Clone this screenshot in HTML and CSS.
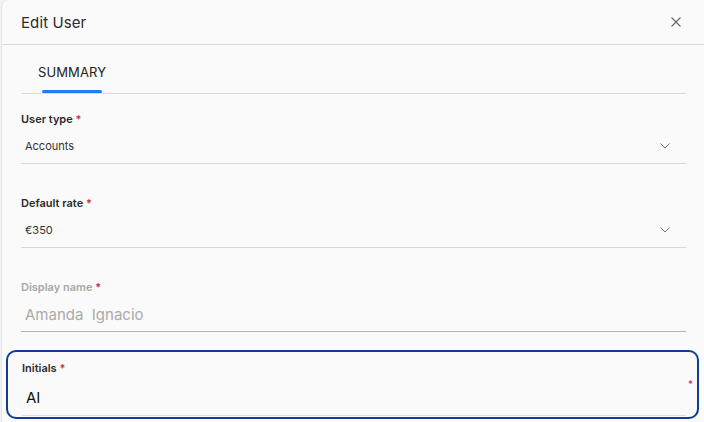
FILE: index.html
```html
<!DOCTYPE html>
<html lang="en">
<head>
    <meta charset="UTF-8">
    <title>Edit User</title>
    <link rel="stylesheet" href="styles.css">
</head>
<body>

<div class="dialog">
    <div class="dialog-header">
        <h2>Edit User</h2>
        <button class="close-btn" aria-label="Close">
            <svg width="10" height="10" viewBox="0 0 10 10"><path d="M0.5 0.5L9.5 9.5M9.5 0.5L0.5 9.5" stroke="#666" stroke-width="1.1" fill="none"/></svg>
        </button>
    </div>

    <div class="dialog-body">
        <div class="tabs">
            <div class="tab active">SUMMARY</div>
        </div>

        <div class="field">
            <label>User type <span class="req">*</span></label>
            <div class="control">
                <span class="value">Accounts</span>
                <svg class="chevron" width="10" height="6" viewBox="0 0 10 6"><path d="M0.5 0.5L5 5L9.5 0.5" stroke="#777" stroke-width="1" fill="none"/></svg>
            </div>
        </div>

        <div class="field">
            <label>Default rate <span class="req">*</span></label>
            <div class="control">
                <span class="value">€350</span>
                <svg class="chevron" width="10" height="6" viewBox="0 0 10 6"><path d="M0.5 0.5L5 5L9.5 0.5" stroke="#777" stroke-width="1" fill="none"/></svg>
            </div>
        </div>

        <div class="field disabled">
            <label>Display name <span class="req">*</span></label>
            <div class="control">
                <span class="value big">Amanda&nbsp; Ignacio</span>
            </div>
        </div>
    </div>

    <div class="field focused">
        <label>Initials <span class="req">*</span></label>
        <div class="control">
            <span class="value big">AI</span>
        </div>
        <span class="side-req">*</span>
    </div>
</div>

</body>
</html>
```

FILE: styles.css
```css
body {
    margin: 0;
    padding: 0;
    background: #f2f2f4;
    font-family: 'Inter', 'Open Sans', sans-serif;
    overflow: hidden;
}

.dialog {
    background: #fafafa;
    height: 422px;
    margin-left: 1px;
    border-left: 1px solid #e4e4e8;
    border-radius: 8px 0 0 0;
    position: relative;
}

.dialog-header {
    display: flex;
    align-items: center;
    justify-content: space-between;
    height: 44px;
    padding: 0 23px 0 19px;
    border-bottom: 1px solid #d9d7ea;
}

.dialog-header h2 {
    margin: 0;
    font-size: 15px;
    font-weight: 400;
    color: #2b2b2b;
    letter-spacing: 0.1px;
}

.close-btn {
    border: none;
    background: none;
    padding: 0;
    display: flex;
    cursor: pointer;
}

.dialog-body {
    padding: 0 18px 0 19px;
}

.tabs {
    display: flex;
    height: 48px;
    border-bottom: 1px solid #d9d9e2;
}

.tab {
    position: relative;
    padding: 0 17px;
    font-size: 13px;
    color: #222;
    line-height: 54px;
    letter-spacing: 0.1px;
}

.tab.active::after {
    content: "";
    position: absolute;
    left: 21px;
    width: 60px;
    bottom: 0;
    height: 3px;
    border-radius: 2px;
    background: #1a7ff2;
}

.field {
    padding-top: 18px;
}

.field + .field {
    padding-top: 32px;
}

.field label {
    display: block;
    font-size: 11px;
    font-weight: 600;
    color: #2a2a2a;
    line-height: 14px;
}

.req {
    color: #c0334a;
}

.control {
    display: flex;
    align-items: center;
    justify-content: space-between;
    height: 34px;
    padding: 3px 16px 0 4px;
    border-bottom: 1px solid #d6d5e2;
}

.value {
    font-size: 11px;
    color: #333;
}

.value.big {
    font-size: 15px;
}

.disabled label {
    color: #a8a8a8;
}

.disabled .value {
    color: #aaa;
}

.disabled .control {
    border-bottom-color: #b3b2bc;
}

.focused {
    margin: 18px 5px 0 4px;
    padding: 9px 11px 0 14px;
    border: 2px solid #0f3b91;
    border-radius: 10px;
    position: relative;
    height: 56px;
}

.focused .control {
    height: 36px;
    padding-top: 4px;
    border-bottom-color: #dedde6;
}

.focused .value {
    color: #111;
}

.side-req {
    position: absolute;
    right: 4px;
    top: 26px;
    font-size: 10px;
    color: #c0334a;
}
```
